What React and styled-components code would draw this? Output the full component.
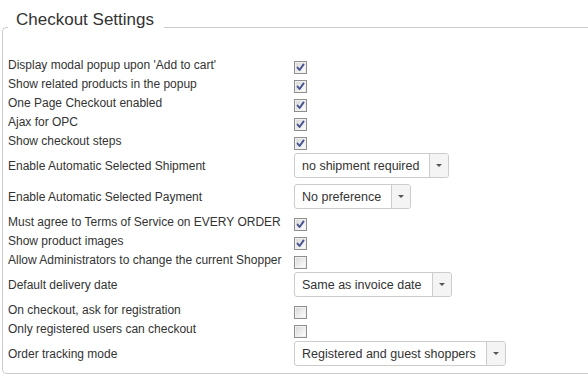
import styled, { createGlobalStyle } from 'styled-components';

const GlobalStyle = createGlobalStyle`
  html, body {
    margin: 0;
    padding: 0;
    background: #fff;
    overflow: hidden;
  }
  body {
    font-family: Arial, "Liberation Sans", sans-serif;
    color: #333;
  }
`;

const settings = [
  { label: "Display modal popup upon 'Add to cart'", checked: true },
  { label: 'Show related products in the popup', checked: true },
  { label: 'One Page Checkout enabled', checked: true },
  { label: 'Ajax for OPC', checked: true },
  { label: 'Show checkout steps', checked: true },
  { label: 'Enable Automatic Selected Shipment', select: 'no shipment required' },
  { label: 'Enable Automatic Selected Payment', select: 'No preference' },
  { label: 'Must agree to Terms of Service on EVERY ORDER', checked: true },
  { label: 'Show product images', checked: true },
  { label: 'Allow Administrators to change the current Shopper', checked: false },
  { label: 'Default delivery date', select: 'Same as invoice date' },
  { label: 'On checkout, ask for registration', checked: false },
  { label: 'Only registered users can checkout', checked: false },
  { label: 'Order tracking mode', select: 'Registered and guest shoppers' },
];

const CheckBox = ({ checked }) => (
  <Box>
    {checked && (
      <svg width="11" height="11" viewBox="0 0 11 11">
        <path
          d="M2.6 5.6 L4.6 8 L8.6 2.4"
          fill="none"
          stroke="#46528f"
          strokeWidth="1.9"
          strokeLinecap="round"
          strokeLinejoin="round"
        />
      </svg>
    )}
  </Box>
);

const Dropdown = ({ value }) => (
  <Select>
    <SelectValue>{value}</SelectValue>
    <SelectArrow>
      <Caret />
    </SelectArrow>
  </Select>
);

const App = () => {
  return (
    <>
      <GlobalStyle />
      <Fieldset>
        <Legend>Checkout Settings</Legend>
        {settings.map((item) => (
          <Row key={item.label} tall={!!item.select}>
            <Label>{item.label}</Label>
            {item.select ? (
              <Dropdown value={item.select} />
            ) : (
              <CheckBox checked={item.checked} />
            )}
          </Row>
        ))}
      </Fieldset>
    </>
  );
};

// STYLED COMPONENTS

// the panel runs on past the right edge of the page, so no right border shows
const Fieldset = styled.fieldset`
  box-sizing: border-box;
  width: 586px;
  min-width: 0;
  margin: 10px 0 0 2px;
  padding: 10px 0 4px 5px;
  border: 1px solid #cbcbcb;
  border-right: none;
  border-radius: 5px 0 0 5px;
`;

const Legend = styled.legend`
  padding: 0 10px 15px 8px;
  font-size: 17px;
  line-height: 20px;
  color: #333;
`;

const Row = styled.div`
  display: flex;
  align-items: center;
  height: ${(p) => (p.tall ? 31 : 19)}px;
`;

const Label = styled.div`
  width: 286px;
  flex-shrink: 0;
  font-size: 12px;
  color: #333;
  white-space: nowrap;
`;

const Box = styled.span`
  box-sizing: border-box;
  display: flex;
  align-items: center;
  justify-content: center;
  width: 13px;
  height: 13px;
  margin-top: 6px;
  border: 1px solid #8f8f8f;
  background: linear-gradient(135deg, #d6d6d6 0%, #f4f4f4 70%, #fff 100%);
  box-shadow: inset 0 0 0 1px #f0f0f0;
`;

const Select = styled.div`
  box-sizing: border-box;
  display: inline-flex;
  height: 25px;
  border: 1px solid #ccc;
  border-radius: 3px;
  background: #fff;
  font-size: 12.5px;
  color: #333;
`;

const SelectValue = styled.span`
  display: flex;
  align-items: center;
  padding: 0 10px 0 7px;
  white-space: nowrap;
`;

const SelectArrow = styled.span`
  display: flex;
  align-items: center;
  justify-content: center;
  width: 18px;
  border-left: 1px solid #ccc;
  background: #f4f4f4;
  border-radius: 0 2px 2px 0;
`;

const Caret = styled.span`
  width: 0;
  height: 0;
  border-left: 3px solid transparent;
  border-right: 3px solid transparent;
  border-top: 3px solid #555;
`;

export default App;
